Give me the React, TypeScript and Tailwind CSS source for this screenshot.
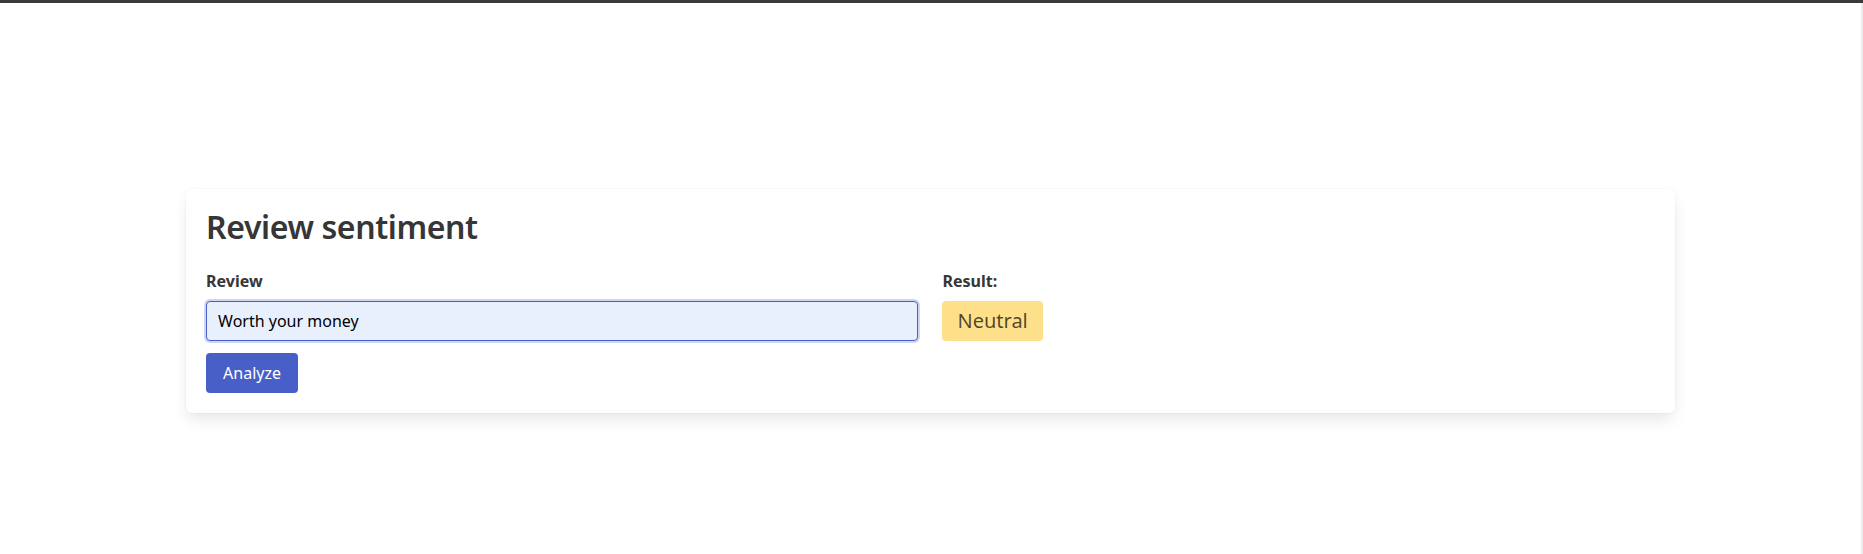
export default function App() {
  return (
    <div
      className="flex min-h-[554px] flex-col bg-white text-[#4a4a4a]"
      style={{ fontFamily: '"Noto Sans", "Open Sans", sans-serif' }}
    >
      <div className="h-[3px] bg-[#3a3a3a]" />
      <div className="flex flex-1">
        <main className="flex-1 pt-[186px]">
          <div className="mx-auto w-4/5 rounded-[6px] bg-white p-5 shadow-[0_8px_16px_-2px_rgb(10_10_10/10%),0_0_0_1px_rgb(10_10_10/2%)]">
            <h1 className="mb-6 text-[32px] font-semibold leading-[36px] tracking-[-0.4px] text-[#363636]">
              Review sentiment
            </h1>
            <div className="grid grid-cols-2 gap-6">
              <div>
                <label className="mb-2 block text-base font-bold leading-6 text-[#363636]">
                  Review
                </label>
                <input
                  className="block h-10 w-full rounded border border-[#485fc7] bg-[#e8f0fe] px-[11px] text-base text-black shadow-[0_0_0_2px_rgb(72_95_199/25%)] outline-none"
                  defaultValue="Worth your money"
                />
                <button className="mt-3 h-10 rounded bg-[#485fc7] px-[17px] text-base leading-6 text-white">
                  Analyze
                </button>
              </div>
              <div>
                <label className="mb-2 block text-base font-bold leading-6 text-[#363636]">
                  Result:
                </label>
                <span className="inline-flex h-10 items-center rounded bg-[#ffe08a] px-[15px] text-xl text-black/70">
                  Neutral
                </span>
              </div>
            </div>
          </div>
        </main>
        <div className="w-[2px] bg-[#ececec]" />
      </div>
    </div>
  );
}
